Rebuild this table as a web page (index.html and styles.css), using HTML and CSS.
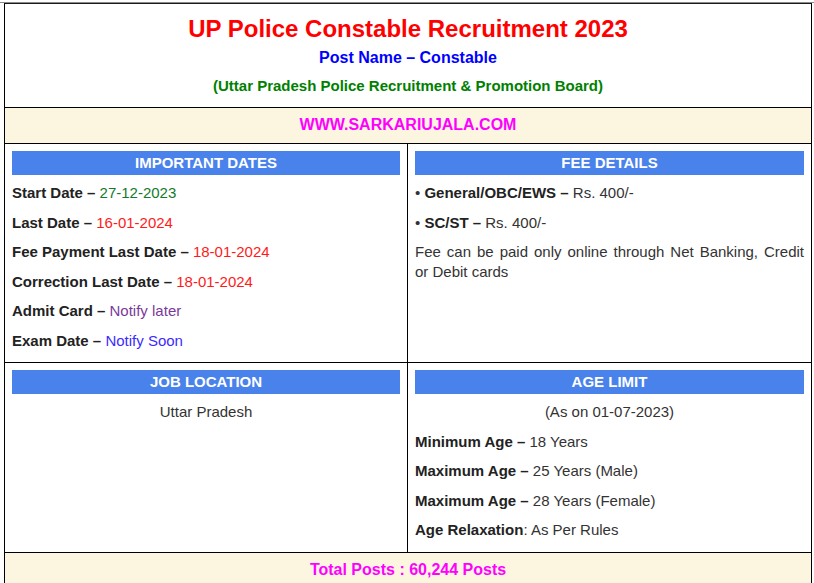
FILE: index.html
```html
<!DOCTYPE html>
<html>
<head>
<meta charset="utf-8">
<link rel="stylesheet" href="styles.css">
</head>
<body>
<div class="page">
  <div class="topline"></div>
  <div class="card">
    <div class="head">
      <h1 class="title">UP Police Constable Recruitment 2023</h1>
      <div class="post">Post Name – Constable</div>
      <div class="board">(Uttar Pradesh Police Recruitment &amp; Promotion Board)</div>
    </div>
    <div class="band site">WWW.SARKARIUJALA.COM</div>
    <div class="grid">
      <div class="cell">
        <div class="bar">IMPORTANT DATES</div>
        <p><b>Start Date –</b> <span class="green">27-12-2023</span></p>
        <p><b>Last Date –</b> <span class="red">16-01-2024</span></p>
        <p><b>Fee Payment Last Date –</b> <span class="red">18-01-2024</span></p>
        <p><b>Correction Last Date –</b> <span class="red">18-01-2024</span></p>
        <p><b>Admit Card –</b> <span class="purple">Notify later</span></p>
        <p><b>Exam Date –</b> <span class="blue">Notify Soon</span></p>
      </div>
      <div class="cell">
        <div class="bar">FEE DETAILS</div>
        <p>• <b>General/OBC/EWS –</b> Rs. 400/-</p>
        <p>• <b>SC/ST –</b> Rs. 400/-</p>
        <p class="just">Fee can be paid only online through Net Banking, Credit or Debit cards</p>
      </div>
    </div>
    <div class="grid">
      <div class="cell">
        <div class="bar">JOB LOCATION</div>
        <p class="center">Uttar Pradesh</p>
      </div>
      <div class="cell">
        <div class="bar">AGE LIMIT</div>
        <p class="center">(As on 01-07-2023)</p>
        <p><b>Minimum Age –</b> 18 Years</p>
        <p><b>Maximum Age –</b> 25 Years (Male)</p>
        <p><b>Maximum Age –</b> 28 Years (Female)</p>
        <p><b>Age Relaxation</b>: As Per Rules</p>
      </div>
    </div>
    <div class="band total">Total Posts : 60,244 Posts</div>
  </div>
</div>
</body>
</html>
```

FILE: styles.css
```css
* { box-sizing: border-box; }
html, body { margin: 0; padding: 0; background: #fff; }
body {
  font-family: "Liberation Sans", Arial, sans-serif;
  color: #333;
  font-size: 15px;
}
.page {
  padding: 2px 3px 0 4px;
}
.topline {
  height: 1px;
  background: #8a8a8a;
  margin-left: -4px;
  margin-right: -3px;
}
.card {
  width: 808px;
  border: 1px solid #000;
  border-top-color: #1a1a1a;
}
.head {
  text-align: center;
  padding: 11px 8px 11px;
}
.title {
  margin: 0;
  font-size: 24px;
  line-height: 28px;
  font-weight: bold;
  color: #ff0000;
}
.post {
  margin-top: 5px;
  font-size: 16px;
  line-height: 20px;
  font-weight: bold;
  color: #0000ff;
}
.board {
  margin-top: 8px;
  font-size: 15px;
  line-height: 20px;
  font-weight: bold;
  color: #008000;
}
.band {
  background: #fcf5df;
  border-top: 1px solid #000;
  text-align: center;
  font-weight: bold;
  color: #ff00ff;
}
.site {
  font-size: 16px;
  line-height: 35px;
  padding-bottom: 1px;
  line-height: 34px;
}
.total {
  font-size: 16px;
  line-height: 33px;
}
.grid {
  display: grid;
  grid-template-columns: 1fr 1fr;
  border-top: 1px solid #000;
}
.cell {
  padding: 7px 7px 12px;
}
.cell:first-child {
  border-right: 1px solid #000;
}
.bar {
  background: #4a82ec;
  color: #fff;
  font-weight: bold;
  text-align: center;
  height: 24px;
  line-height: 24px;
  font-size: 15px;
  margin-bottom: 8px;
}
.cell p {
  margin: 0 0 10px;
  line-height: 19.5px;
}
.cell p:last-child { margin-bottom: 0; }
.cell b { color: #222; }
.center { text-align: center; }
.just { text-align: justify; }
.green { color: #137a2b; }
.red { color: #ff1a1a; }
.purple { color: #7b3a9a; }
.blue { color: #3c2bff; }
```
